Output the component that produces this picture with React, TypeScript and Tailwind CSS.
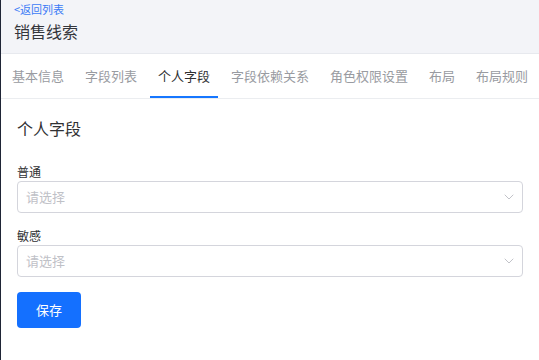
import { ChevronDown } from 'lucide-react';

const tabs = ['基本信息', '字段列表', '个人字段', '字段依赖关系', '角色权限设置', '布局', '布局规则'];
const activeTab = '个人字段';

function SelectField({ label }: { label: string }) {
    return (
        <div>
            <p className="text-[12px] leading-[16px] text-[#303133]">{label}</p>
            <div className="mt-px flex h-[32px] items-center justify-between rounded-[4px] border border-[#d4d5dc] bg-white pl-[8px] pr-[5px]">
                <span className="text-[13px] text-[#bfc1c7]">请选择</span>
                <ChevronDown size={16} strokeWidth={1.3} className="text-[#b8bac0]" />
            </div>
        </div>
    );
}

export default function App() {
    return (
        <div
            className="min-h-[360px] w-full border-l border-[#1f2536] bg-white"
            style={{ fontFamily: '"Noto Sans CJK SC", "Noto Sans", sans-serif' }}
        >
            <div className="h-[54px] border-b border-[#e7e9ee] bg-[#f3f4f8] px-[13px] pt-[1px]">
                <a className="block text-[11px] leading-[16px] text-[#3b7bf6]">&lt;返回列表</a>
                <h1 className="mt-[2px] text-[16px] leading-[24px] text-[#33353b]">销售线索</h1>
            </div>

            <div className="flex h-[45px] gap-[5px] border-b border-[#ebedf0] pl-[3px]">
                {tabs.map((tab) => (
                    <div
                        key={tab}
                        className={`flex items-center border-b-2 px-2 pt-[1px] text-[13px] ${tab === activeTab
                            ? 'border-[#1677ff] text-[#303133]'
                            : 'border-transparent text-[#999ba1]'
                            }`}
                    >
                        {tab}
                    </div>
                ))}
            </div>

            <div className="px-[16px] pt-[17px]">
                <h2 className="text-[16px] leading-[24px] text-[#303133]">个人字段</h2>

                <div className="mt-[24px] flex flex-col gap-[15px]">
                    <SelectField label="普通" />
                    <SelectField label="敏感" />
                </div>

                <button className="mt-[15px] h-[36px] w-[64px] rounded-[4px] bg-[#1470ff] text-[13px] text-white">
                    保存
                </button>
            </div>
        </div>
    );
}
